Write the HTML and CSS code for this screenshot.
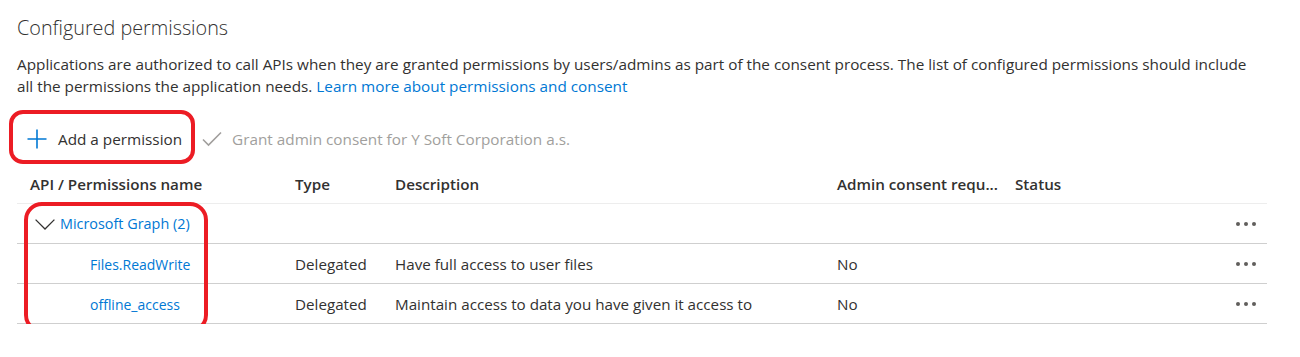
FILE: index.html
```html
<!DOCTYPE html>
<html lang="en">
<head>
<meta charset="utf-8">
<title>Configured permissions</title>
<link rel="stylesheet" href="styles.css">
</head>
<body>
<div class="page">
  <h2 class="title">Configured permissions</h2>
  <p class="desc">Applications are authorized to call APIs when they are granted permissions by users/admins as part of the consent process. The list of configured permissions should include all the permissions the application needs. <a class="link" href="#">Learn more about permissions and consent</a></p>

  <div class="toolbar">
    <button class="tool add">
      <svg class="ico" width="20" height="20" viewBox="0 0 20 20"><path d="M10 0.5V19.5M0.5 10H19.5" stroke="#0078d4" stroke-width="1.6" fill="none"/></svg>
      <span>Add a permission</span>
    </button>
    <button class="tool grant" disabled>
      <svg class="ico" width="20" height="16" viewBox="0 0 20 16"><path d="M1 8.5L6.5 14L19 1.5" stroke="#a19f9d" stroke-width="1.6" fill="none"/></svg>
      <span>Grant admin consent for Y Soft Corporation a.s.</span>
    </button>
  </div>

  <div class="table">
    <div class="row head">
      <div class="cell">API / Permissions name</div>
      <div class="cell">Type</div>
      <div class="cell">Description</div>
      <div class="cell">Admin consent requ...</div>
      <div class="cell">Status</div>
      <div class="cell"></div>
    </div>
    <div class="row group">
      <div class="cell name">
        <svg class="chev" width="20" height="11" viewBox="0 0 20 11"><path d="M0.6 0.6L10 10L19.4 0.6" stroke="#323130" stroke-width="1.3" fill="none"/></svg>
        <a class="link api" href="#">Microsoft Graph (2)</a>
      </div>
      <div class="cell"></div>
      <div class="cell"></div>
      <div class="cell"></div>
      <div class="cell"></div>
      <div class="cell more"><span class="dots"><i></i><i></i><i></i></span></div>
    </div>
    <div class="row">
      <div class="cell perm"><a class="link scope" href="#">Files.ReadWrite</a></div>
      <div class="cell">Delegated</div>
      <div class="cell">Have full access to user files</div>
      <div class="cell">No</div>
      <div class="cell"></div>
      <div class="cell more"><span class="dots"><i></i><i></i><i></i></span></div>
    </div>
    <div class="row">
      <div class="cell perm"><a class="link scope" href="#">offline_access</a></div>
      <div class="cell">Delegated</div>
      <div class="cell">Maintain access to data you have given it access to</div>
      <div class="cell">No</div>
      <div class="cell"></div>
      <div class="cell more"><span class="dots"><i></i><i></i><i></i></span></div>
    </div>
  </div>

  <div class="mark mark-add"></div>
  <div class="mark mark-graph"></div>
</div>
</body>
</html>
```

FILE: styles.css
```css
* { box-sizing: border-box; }

html, body {
  margin: 0;
  background: #ffffff;
}

body {
  font-family: "Open Sans", "Noto Sans", sans-serif;
  color: #323130;
  font-size: 15.2px;
}

.page {
  position: relative;
  padding: 14px 33px 0 17px;
}

.title {
  margin: 0;
  font-size: 19.8px;
  font-weight: 300;
  line-height: 28px;
  color: #323130;
}

.desc {
  margin: 11px 0 0;
  max-width: 1245px;
  line-height: 22px;
  font-size: 15.3px;
}

.link {
  color: #0078d4;
  text-decoration: none;
}

.toolbar {
  display: flex;
  align-items: center;
  height: 40px;
  margin-top: 22px;
}

.tool {
  display: flex;
  align-items: center;
  height: 40px;
  border: 0;
  background: none;
  font: inherit;
  font-size: 15.3px;
  padding: 0;
  cursor: pointer;
}

.tool.add {
  padding-left: 10px;
  gap: 11px;
  color: #323130;
}

.tool.grant {
  margin-left: 20px;
  gap: 10px;
  color: #a19f9d;
}

.table {
  margin-top: 5px;
  width: 1250px;
}

.row {
  display: grid;
  grid-template-columns: 265px 100px 442px 178px 1fr 60px;
  height: 40px;
  border-bottom: 1px solid #cfcfcf;
  align-items: center;
}

.row.head {
  border-bottom-color: #ededed;
  font-weight: 600;
}

.cell {
  padding-left: 13px;
  white-space: nowrap;
  overflow: hidden;
}

.cell.name {
  display: flex;
  align-items: center;
  gap: 5px;
  padding-left: 18px;
}

.link.api {
  font-size: 14.4px;
}

.link.scope {
  font-size: 14px;
}

.chev {
  display: block;
  margin-top: 2px;
}

.cell.perm {
  padding-left: 73px;
}

.cell.more {
  display: flex;
  justify-content: flex-end;
  padding-right: 11px;
}

.dots {
  display: flex;
  gap: 4px;
}

.dots i {
  display: block;
  width: 4px;
  height: 4px;
  border-radius: 50%;
  background: #605e5c;
}

.mark {
  position: absolute;
  border: 4px solid #ec1c24;
  border-radius: 14px;
  pointer-events: none;
}

.mark-add {
  left: 9px;
  top: 110px;
  width: 186px;
  height: 54px;
}

.mark-graph {
  left: 24px;
  top: 202px;
  width: 184px;
  height: 131px;
  border-radius: 18px;
}
```
